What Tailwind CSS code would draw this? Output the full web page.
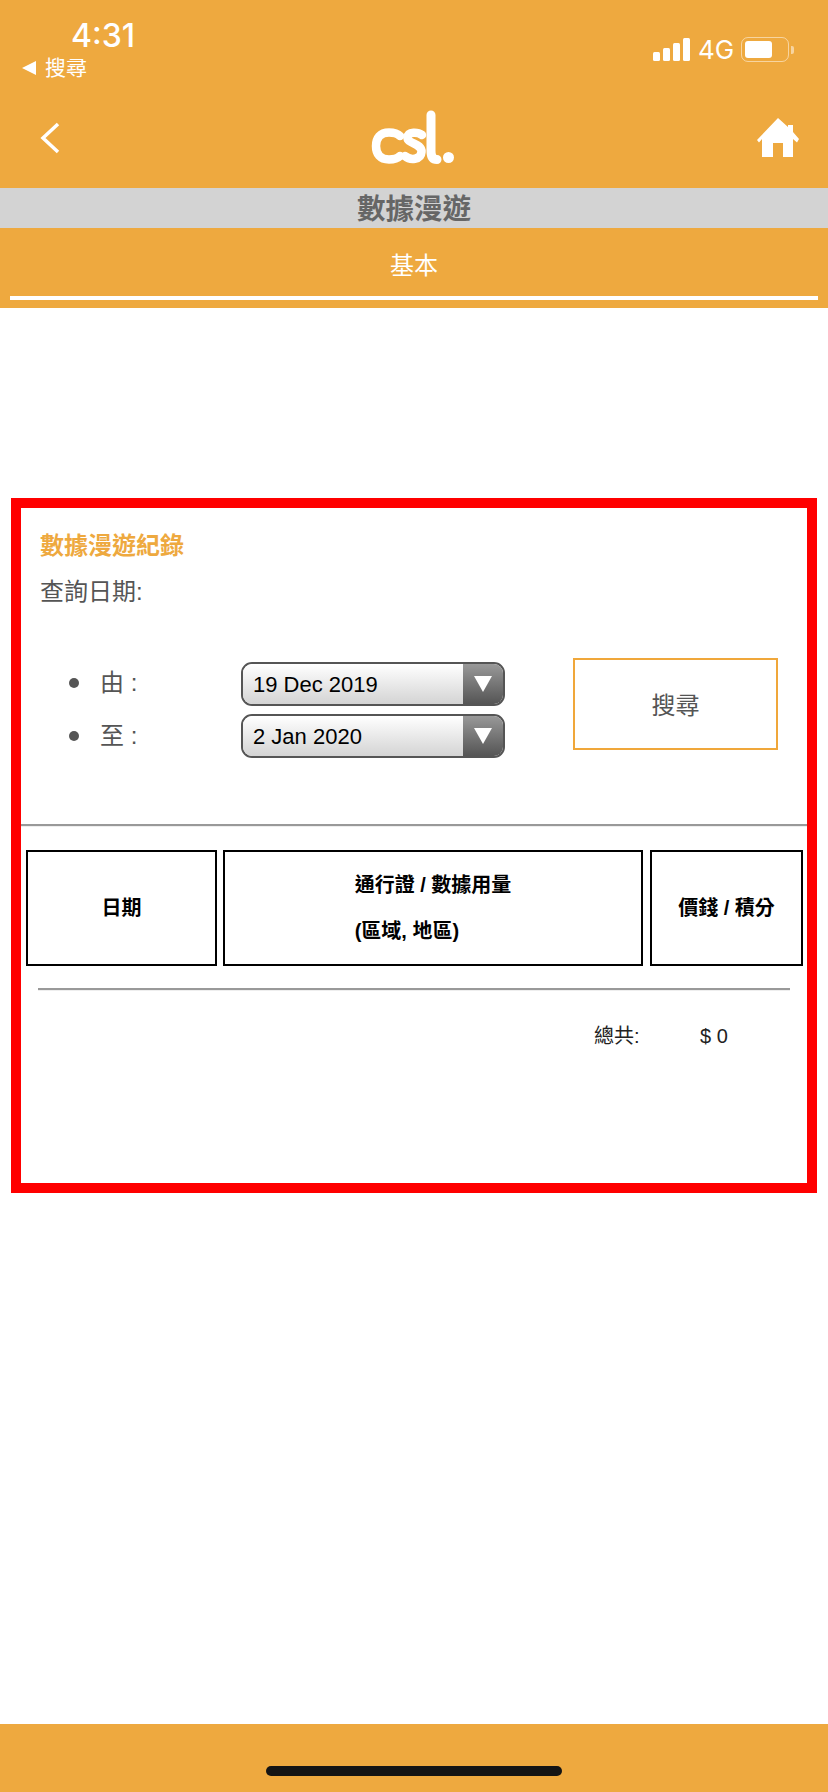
<!DOCTYPE html>
<html lang="zh-Hant">
<head>
  <meta charset="UTF-8">
  <meta name="viewport" content="width=device-width, initial-scale=1.0">
  <title>數據漫遊</title>
  <script src="https://cdn.jsdelivr.net/npm/@tailwindcss/browser@4"></script>
</head>
<body class="bg-white font-['Liberation_Sans','Noto_Sans_CJK_TC',sans-serif]">
  <div class="w-[828px] h-[1792px] flex flex-col">

    <!-- status bar + nav -->
    <header class="h-[188px] bg-[#eea93f] text-white relative">
      <div class="absolute left-[71px] top-[16px] text-[32px] leading-[40px] font-['Inter',sans-serif] font-medium">4:31</div>
      <div class="absolute left-[22px] top-[55px] flex items-center gap-[9px] text-[21px] leading-[26px]">
        <span class="w-0 h-0 border-y-[7px] border-y-transparent border-r-[14px] border-r-white"></span>
        <span>搜尋</span>
      </div>
      <div class="absolute left-[653px] top-[38px] h-[23px] flex items-end gap-[3px]">
        <span class="w-[7px] h-[9px] bg-white rounded-[1.5px]"></span>
        <span class="w-[7px] h-[13px] bg-white rounded-[1.5px]"></span>
        <span class="w-[7px] h-[18px] bg-white rounded-[1.5px]"></span>
        <span class="w-[7px] h-[23px] bg-white rounded-[1.5px]"></span>
      </div>
      <div class="absolute left-[698px] top-[34px] text-[26px] leading-[32px] font-['Inter',sans-serif]">4G</div>
      <div class="absolute left-[741px] top-[37px] flex items-center gap-[2px]">
        <div class="w-[48px] h-[25px] rounded-[7px] border-[1.5px] border-white/50 p-[3px]">
          <div class="w-[27px] h-full bg-white rounded-[3px]"></div>
        </div>
        <span class="w-[3px] h-[8px] bg-white/50 rounded-r-[2px]"></span>
      </div>
      <svg class="absolute left-[40px] top-[122px]" width="20" height="32" viewBox="0 0 20 32" fill="none" stroke="white" stroke-width="3.5">
        <path d="M18 2 L3 16 L18 30"/>
      </svg>
      <!-- csl. logo -->
      <svg class="absolute left-[370px] top-[110px]" width="90" height="56" viewBox="0 0 90 56" fill="none" stroke="white" stroke-width="8.500" stroke-linecap="round">
        <path d="M30 26 C27 23 23 22.500 19 22.500 C10 22.500 6 28 6 36 C6 44 10 49.500 19 49.500 C23 49.500 27 49 30 46"/>
        <path d="M52 25 C48 22 38 21 37.500 27.500 C37 34 52 33 51.500 42 C51 50 40 50.500 35 46"/>
        <path d="M61 5 V41 C61 47 63 49.500 67 49.500" stroke-width="9"/>
        <circle cx="78.500" cy="47.500" r="5.500" fill="white" stroke="none"/>
      </svg>
      <svg class="absolute left-[756px] top-[117px]" width="46" height="42" viewBox="0 0 46 42" fill="white">
        <path d="M22 1 L32 10 V8 H37 V15 L43 22 L41 25.500 L37 22 V40 H27 V26 H17 V40 H6 V22 L3 25.500 L1 23 Z"/>
      </svg>
    </header>

    <div class="h-[40px] pt-[3px] bg-[#d3d3d3] flex items-center justify-center text-[28.500px] font-bold text-[#666]">數據漫遊</div>

    <nav class="h-[80px] bg-[#eea93f] pt-[16px] px-[10px] flex flex-col">
      <div class="h-[56px] flex items-center justify-center text-white text-[24px] leading-[32px] border-b-4 border-white pb-[8px]">基本</div>
    </nav>

    <main class="flex-1 flex flex-col">
      <section class="mt-[190px] mx-[11px] h-[695px] border-[10px] border-[#ff0000] flex flex-col">
        <div class="pl-[19px] pt-[25px]">
          <h2 class="text-[24px] leading-[26px] font-bold text-[#eea93f]">數據漫遊紀錄</h2>
          <p class="mt-[20px] text-[24px] leading-[26px] text-[#555]">查詢日期:</p>
        </div>

        <div class="mt-[53px] flex pl-[48px] h-[100px] items-start">
          <div class="w-[172px] pt-[12px] flex flex-col gap-[27px] text-[24px] leading-[26px] text-[#555]">
            <div class="flex items-center"><span class="w-[10px] h-[10px] rounded-full bg-[#555] mr-[21px]"></span>由 :</div>
            <div class="flex items-center"><span class="w-[10px] h-[10px] rounded-full bg-[#555] mr-[21px]"></span>至 :</div>
          </div>
          <div class="w-[264px] flex flex-col gap-[8px] mt-[4px]">
            <div class="h-[44px] flex border-2 border-[#555] rounded-[11px] overflow-hidden text-[22px] text-black">
              <div class="flex-1 pl-[10px] flex items-center bg-gradient-to-b from-white to-[#d4d4d4]">19 Dec 2019</div>
              <div class="w-[40px] flex items-center justify-center bg-gradient-to-b from-[#999] to-[#555]">
                <span class="w-0 h-0 border-x-[9px] border-x-transparent border-t-[16px] border-t-white"></span>
              </div>
            </div>
            <div class="h-[44px] flex border-2 border-[#555] rounded-[11px] overflow-hidden text-[22px] text-black">
              <div class="flex-1 pl-[10px] flex items-center bg-gradient-to-b from-white to-[#d4d4d4]">2 Jan 2020</div>
              <div class="w-[40px] flex items-center justify-center bg-gradient-to-b from-[#999] to-[#555]">
                <span class="w-0 h-0 border-x-[9px] border-x-transparent border-t-[16px] border-t-white"></span>
              </div>
            </div>
          </div>
          <button class="ml-[68px] w-[205px] h-[92px] pt-[3px] border-2 border-[#f0a73a] text-[24px] text-[#555]">搜尋</button>
        </div>

        <div class="mt-[66px] h-[3px] border-t-2 border-[#999] bg-[#eee]"></div>

        <div class="mt-[23px] flex gap-[6px] pl-[5px] text-[20px] font-bold text-black">
          <div class="w-[191px] h-[116px] border-2 border-black flex items-center justify-center">日期</div>
          <div class="w-[420px] h-[116px] border-2 border-black flex items-center justify-center leading-[23px]">
            <div class="flex flex-col gap-[23px]">
              <span>通行證 / 數據用量</span>
              <span>(區域, 地區)</span>
            </div>
          </div>
          <div class="w-[153px] ml-[1px] h-[116px] border-2 border-black flex items-center justify-center">價錢 / 積分</div>
        </div>

        <div class="mt-[22px] mx-[17px] h-[3px] border-t-2 border-[#999] bg-[#eee]"></div>

        <div class="mt-[32px] flex text-[20px] leading-[26px] text-[#222]">
          <span class="ml-[573px] w-[106px]">總共:</span>
          <span>$ 0</span>
        </div>
      </section>
    </main>

    <footer class="h-[68px] bg-[#eea93f] flex justify-center pt-[42px]">
      <div class="w-[296px] h-[10px] rounded-full bg-[#141414]"></div>
    </footer>
  </div>
</body>
</html>
